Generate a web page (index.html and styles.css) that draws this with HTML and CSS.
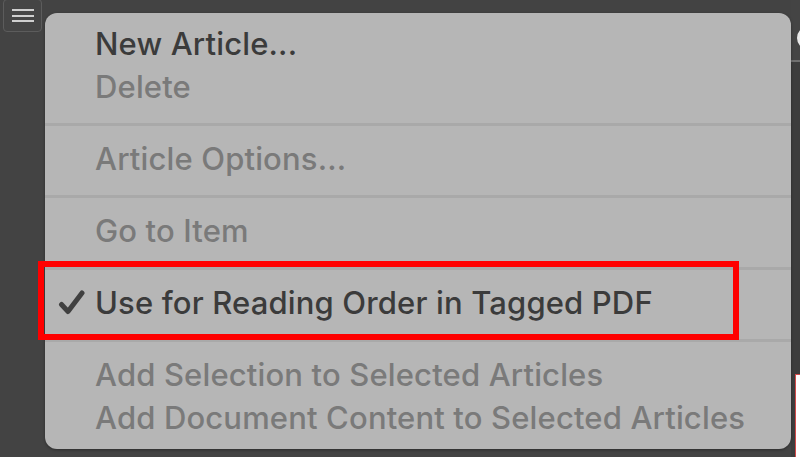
FILE: index.html
```html
<!DOCTYPE html>
<html>
<head>
<meta charset="utf-8">
<link rel="stylesheet" href="styles.css">
</head>
<body>
<div class="app">
  <div class="toolbar">
    <button class="menu-btn" aria-label="Panel menu">
      <span class="bar"></span><span class="bar"></span><span class="bar"></span>
    </button>
  </div>
  <div class="side-edge">
    <span class="edge-arc"></span>
    <span class="edge-box"></span>
  </div>

  <div class="menu">
    <div class="item"><span class="check"></span><span class="label">New Article...</span></div>
    <div class="item disabled"><span class="check"></span><span class="label">Delete</span></div>
    <div class="sep"></div>
    <div class="item disabled"><span class="check"></span><span class="label">Article Options...</span></div>
    <div class="sep"></div>
    <div class="item disabled"><span class="check"></span><span class="label">Go to Item</span></div>
    <div class="sep"></div>
    <div class="item"><span class="check"><svg viewBox="0 0 28 28" width="28" height="28"><path d="M3.5 15.5 L10 22.5 L24 4" fill="none" stroke="#404040" stroke-width="5" stroke-linecap="round" stroke-linejoin="round"/></svg></span><span class="label">Use for Reading Order in Tagged PDF</span></div>
    <div class="sep"></div>
    <div class="item disabled"><span class="check"></span><span class="label">Add Selection to Selected Articles</span></div>
    <div class="item disabled"><span class="check"></span><span class="label">Add Document Content to Selected Articles</span></div>
  </div>

  <div class="highlight"></div>
</div>
</body>
</html>
```

FILE: styles.css
```css
html, body {
  margin: 0;
  padding: 0;
}
body {
  background: #434343;
  width: 800px;
  height: 457px;
  overflow: hidden;
  font-family: Inter, "Liberation Sans", sans-serif;
}
.app {
  position: relative;
  width: 800px;
  height: 457px;
}
.toolbar {
  display: flex;
  padding: 0 0 0 3px;
  height: 34px;
}
.menu-btn {
  width: 39px;
  height: 33px;
  margin-top: -1px;
  border: 1px solid #5c5c5c;
  border-radius: 4px;
  background: #454545;
  display: flex;
  flex-direction: column;
  justify-content: center;
  align-items: center;
  gap: 3.5px;
  padding: 0;
}
.bar {
  display: block;
  width: 22px;
  height: 2px;
  background: #cfcfcf;
}
.side-edge {
  position: absolute;
  left: 791px;
  top: 0;
  width: 9px;
  height: 457px;
  overflow: hidden;
  background: linear-gradient(#444 0 60px, #707070 60px 62px, #3d3d3d 62px);
}
.edge-arc {
  position: absolute;
  left: 6px;
  top: 27px;
  width: 14px;
  height: 16px;
  border: 3px solid #e8e8e8;
  border-radius: 50%;
}
.edge-box {
  position: absolute;
  left: 4px;
  top: 374px;
  width: 20px;
  height: 100px;
  background: #ffffff;
  border: 1px solid #d24a4a;
}
.menu {
  position: absolute;
  left: 45px;
  top: 13px;
  width: 746px;
  height: 436px;
  box-sizing: border-box;
  background: #b6b6b6;
  border-radius: 12px;
  padding: 9px 0 11px 0;
  box-shadow: 0 1px 3px rgba(0,0,0,0.35);
}
.item {
  display: flex;
  align-items: center;
  height: 43px;
  line-height: 43px;
  font-size: 31px;
  font-weight: 500;
  letter-spacing: 0.15px;
  color: #3b3b3b;
  white-space: nowrap;
}
.item.disabled {
  color: #7a7a7a;
}
.check {
  width: 50px;
  flex: none;
  display: flex;
  align-items: center;
  padding-left: 13px;
  box-sizing: border-box;
}
.check svg {
  display: block;
}
.sep {
  height: 3px;
  background: #a9a9a9;
  margin: 15px 0 11px 0;
}
.highlight {
  position: absolute;
  left: 38px;
  top: 261px;
  width: 701px;
  height: 79px;
  box-sizing: border-box;
  border: 6px solid #ff0000;
}
```
